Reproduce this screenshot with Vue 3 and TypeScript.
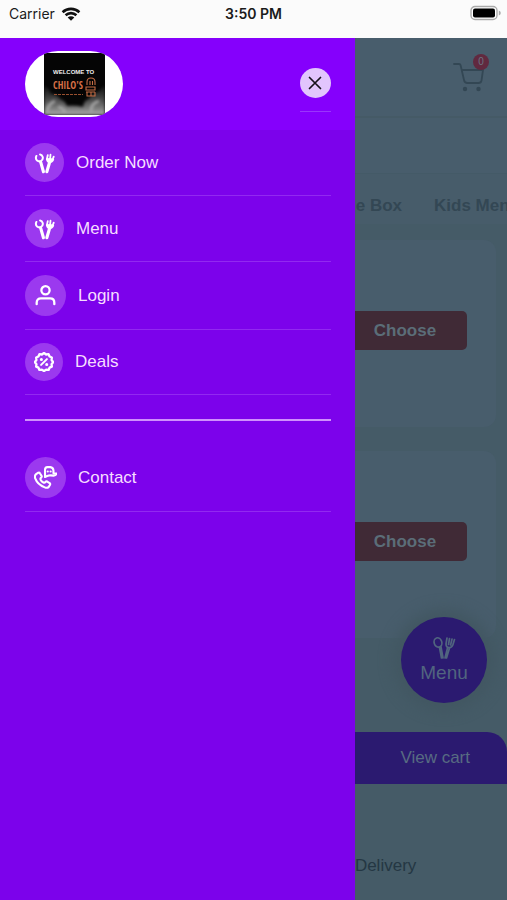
<script setup lang="ts">
import { ref } from 'vue'

type IconName = 'cutlery' | 'user' | 'deal' | 'phone'

interface MenuItem {
  label: string
  icon: IconName
  size: 'small' | 'medium' | 'large'
}

const mainItems: MenuItem[] = [
  { label: 'Order Now', icon: 'cutlery', size: 'medium' },
  { label: 'Menu', icon: 'cutlery', size: 'medium' },
  { label: 'Login', icon: 'user', size: 'large' },
  { label: 'Deals', icon: 'deal', size: 'small' },
]
const extraItems: MenuItem[] = [{ label: 'Contact', icon: 'phone', size: 'large' }]
const groups: MenuItem[][] = [mainItems, extraItems]

const categories: string[] = ['e Box', 'Kids Menu']
const dishes: number[] = [1, 2]
const cartCount = ref(0)
const open = ref(true)
</script>

<template>
  <div class="screen">
    <header class="status">
      <span class="carrier">
        Carrier
        <svg class="wifi" viewBox="0 0 20 14" aria-hidden="true">
          <path d="M1.600 5.200a12.200 12.200 0 0 1 16.800 0M4.600 8.300a7.800 7.800 0 0 1 10.800 0" fill="none" stroke="#111" stroke-width="2.600" />
          <path d="M10 13.800 6.700 10.500a4.700 4.700 0 0 1 6.600 0z" fill="#111" />
        </svg>
      </span>
      <time class="clock">3:50 PM</time>
      <svg class="battery" viewBox="0 0 32 16" aria-hidden="true">
        <rect x="1" y="1.500" width="26" height="13" rx="4" fill="#fff" stroke="#aaa" stroke-width="1.400" />
        <rect x="3" y="3.500" width="22" height="9" rx="2" fill="#000" />
        <path d="M28.800 5.500v5q2-.8 2-2.500t-2-2.500z" fill="#aaa" />
      </svg>
    </header>

    <div class="stage">
      <main class="shop">
        <div class="topbar">
          <a class="cart" href="#cart" aria-label="Cart">
            <svg viewBox="0 0 32 30" aria-hidden="true">
              <path d="M1 2h5q1.300 0 1.600 1.300L11 18q.6 3 3.500 3h11q2.500 0 3-2.500L30 8H9" fill="none" stroke="#334754" stroke-width="1.800" stroke-linecap="round" stroke-linejoin="round" />
              <circle cx="12" cy="27" r="2.200" fill="#334754" />
              <circle cx="25.500" cy="27" r="2.200" fill="#334754" />
            </svg>
            <span class="badge">{{ cartCount }}</span>
          </a>
        </div>
        <div class="strip"></div>
        <nav class="tabs">
          <a v-for="c in categories" :key="c" href="#category">{{ c }}</a>
        </nav>
        <section class="dishes">
          <article v-for="d in dishes" :key="d" class="dish">
            <button type="button" class="choose">Choose</button>
          </article>
        </section>
        <button type="button" class="viewcart">View cart</button>
        <footer class="modes"><a href="#delivery">Delivery</a></footer>
        <button type="button" class="bubble">
          <svg viewBox="0 0 24 24" aria-hidden="true">
            <g fill="none" stroke="#51657f" stroke-width="1.700" stroke-linecap="round" stroke-linejoin="round">
              <ellipse cx="6" cy="6.500" rx="3.800" ry="4.800" transform="rotate(-18 6 6.500)" />
              <path d="M7.500 11.500 9.500 22M9 11 11 22M15 2l-1 6q0 3.300 2.800 3.500 3 .3 4-2.500L22.500 3.500M17.500 2.500l-1 6M20 3l-1.400 6M15.500 12 13 22M17.500 12 14.500 22" />
            </g>
          </svg>
          Menu
        </button>
      </main>

      <aside v-if="open" class="drawer">
        <div class="drawer-head">
          <a class="logo" href="#home" aria-label="Welcome to Chilo's">
            <svg viewBox="0 0 61 62" aria-hidden="true">
              <defs>
                <linearGradient id="smoke" x1="0" y1="0" x2="0" y2="1">
                  <stop offset="0" stop-color="#555" stop-opacity="0.2" />
                  <stop offset="1" stop-color="#ccc" />
                </linearGradient>
                <filter id="soft"><feGaussianBlur stdDeviation="1.600" /></filter>
              </defs>
              <rect width="61" height="62" fill="#050505" />
              <g filter="url(#soft)">
                <path d="M0 33q5 2 7 8 6 0 9 5 5 2 7 7 8-1 16 1 1-7 6-8 3-6 9-7l7-7v30H0z" fill="url(#smoke)" opacity=".85" />
                <path d="M3 58q2-8 8-10M47 58q0-8 8-10M14 54q5 0 7 5" fill="none" stroke="#aaa" stroke-width="2.500" />
              </g>
              <text x="9" y="21" class="logo-small">WELCOME TO</text>
              <text x="9" y="36" class="logo-big">CHILO'S</text>
              <path d="M10 41.500h29" stroke="#99502f" stroke-width="1" stroke-dasharray="3 1" />
              <g fill="none" stroke="#c46c45" stroke-width="1.100">
                <path d="M43 32v-3q0-4 4-4t4 4v3M46 32v-4M48.500 32v-4M42 34h9v3h-9zM42 39h9M43 39v4h8v-4M47 39v4" />
              </g>
            </svg>
          </a>
          <div class="close-wrap">
            <button type="button" class="close" aria-label="Close menu" @click="open = false">
              <svg viewBox="0 0 14 14" aria-hidden="true"><path d="M1.500 1.500l11 11M12.500 1.500l-11 11" stroke="#17121c" stroke-width="1.700" stroke-linecap="round" /></svg>
            </button>
          </div>
        </div>
        <nav class="menu">
          <ul v-for="(group, g) in groups" :key="g">
            <li v-for="item in group" :key="item.label">
              <a href="#menu">
                <span class="disc" :class="item.size">
                  <svg v-if="item.icon === 'cutlery'" viewBox="0 0 24 24" aria-hidden="true">
                    <g fill="none" stroke="#fff" stroke-linecap="round" stroke-linejoin="round">
                      <path d="M2.600 4.300q-1.400 3 .8 5 2.100 1.700 4.500.3 2.200-1.600 1.600-4.200-.7-2.300-2.900-2.700" stroke-width="2.200" />
                      <path d="M7.300 11 10.300 21.500M16.800 12 14 21.500" stroke-width="3.400" />
                      <path d="M15 3.500 14 8M18 3 17.500 8M21.500 5 20 9" stroke-width="2" />
                      <path d="M14 7.500q.2 3.500 3 4 3 0 4.200-3.200l-3.200-1z" stroke-width="1.600" fill="#fff" />
                    </g>
                  </svg>
                  <svg v-else-if="item.icon === 'user'" viewBox="0 0 24 24" aria-hidden="true">
                    <g fill="none" stroke="#fff" stroke-width="2.400" stroke-linecap="round">
                      <circle cx="12" cy="6.500" r="4.300" />
                      <path d="M2.800 21v-1.500q0-4.500 4.500-4.500h9.400q4.500 0 4.500 4.500V21" />
                    </g>
                  </svg>
                  <svg v-else-if="item.icon === 'deal'" viewBox="0 0 24 24" aria-hidden="true">
                    <g fill="none" stroke="#fff" stroke-width="2.800" stroke-linecap="round" stroke-linejoin="round">
                      <path d="M12 2l2.500 1.800 3-.4 1.200 2.800 2.700 1.200-.3 3L23 13l-1.900 2.400.3 3-2.700 1.200-1.200 2.700-3-.3L12 23.500 9.500 22l-3 .3-1.200-2.700-2.700-1.200.3-3L1 13l1.900-2.600-.3-3 2.700-1.200 1.200-2.800 3 .4z" transform="translate(0 -.8)" />
                      <path d="M15.500 8.500l-7 7" stroke-width="2.400" />
                      <path d="M8.800 9h.1M15.200 15h.1" stroke-width="3.600" />
                    </g>
                  </svg>
                  <svg v-else viewBox="0 0 24 24" aria-hidden="true">
                    <g fill="none" stroke="#fff" stroke-width="2.200" stroke-linecap="round" stroke-linejoin="round">
                      <path d="M2.200 8.500 4.500 7q1.200-.3 1.800.8l1.700 2.700q.4 1-.7 1.800-1 .8-.3 2.200 1 1.800 2.800 2.700 1.300.6 2-.4 1-1.200 2-.6l2.500 1.600q1 .8.3 2L15.200 22q-1.500 1.300-4 .3Q3.700 19.500 1.300 13 .3 10 2.200 8.500z" />
                      <path d="M11.500 11.500V4q0-2.800 2.500-2.800h3q3 .3 3.300 3.300v3l3 .3q0 2-2.800 2.200-3.500-.5-5 0-1.500.5-4 1.500z" />
                      <path d="M14.300 5.800h.1M17.300 5.800h.1" stroke-width="2.200" />
                    </g>
                  </svg>
                </span>
                {{ item.label }}
              </a>
            </li>
          </ul>
        </nav>
      </aside>
    </div>
  </div>
</template>

<style>
body {
  margin: 0;
  background: #455b67;
}
</style>

<style scoped>
.screen {
  min-height: 100vh;
  display: flex;
  flex-direction: column;
  overflow: hidden;
  font-family: "Liberation Sans", Arial, sans-serif;
  font-size: 17px;
  line-height: 20px;
}
a {
  color: inherit;
  text-decoration: none;
}
button {
  border: 0;
  padding: 0;
  font: inherit;
  cursor: pointer;
}
svg {
  display: block;
}
.status {
  display: grid;
  grid-template-columns: 1fr auto 1fr;
  align-items: start;
  box-sizing: border-box;
  height: 38px;
  padding: 4px 5px 0 9px;
  background: #fbfbfb;
  color: #1b1b1b;
  font: 14px/20px Inter, sans-serif;
}
.carrier {
  display: flex;
  align-items: center;
  gap: 6px;
}
.wifi {
  width: 20px;
  height: 14px;
}
.clock {
  font-weight: 600;
  margin-right: 4px;
}
.battery {
  width: 32px;
  height: 16px;
  margin-top: 1px;
  justify-self: end;
}
.stage {
  flex: 1;
  display: grid;
  grid-template-columns: 70% 1fr;
}
.shop {
  grid-area: 1 / 1 / 2 / 3;
  min-width: 0;
  position: relative;
  display: flex;
  flex-direction: column;
  background: #455b67;
  color: #334754;
}
.drawer {
  grid-area: 1 / 1 / 2 / 2;
  z-index: 2;
  background: #7c02eb;
  color: #f6ddff;
}
.topbar {
  display: flex;
  justify-content: flex-end;
  box-sizing: border-box;
  height: 80px;
  padding: 24px 22px 0;
  background: #485d6c;
  border-bottom: 2px solid #455a66;
}
.cart {
  position: relative;
  width: 32px;
  height: 30px;
}
.badge {
  position: absolute;
  top: -8px;
  right: -4px;
  width: 16px;
  border-radius: 50%;
  background: #61293f;
  color: #6b7482;
  font-size: 10px;
  line-height: 16px;
  text-align: center;
}
.strip {
  height: 55px;
  background: #485d6c;
  border-bottom: 1px solid #445a67;
}
.tabs {
  display: flex;
  justify-content: flex-end;
  gap: 32px;
  padding: 22px 0 8px;
  margin-right: -13px;
  background: #475c6a;
  font-weight: 700;
  white-space: nowrap;
}
.dishes {
  display: grid;
  gap: 24px;
  padding: 16px 11px;
}
.dish {
  display: flex;
  justify-content: flex-end;
  align-items: flex-start;
  box-sizing: border-box;
  height: 187px;
  padding: 71px 29px 0;
  border-radius: 12px;
  background: #485d6c;
}
.choose {
  width: 124px;
  height: 39px;
  border-radius: 5px;
  background: #402a36;
  color: #5b6d78;
  font-weight: 700;
}
.viewcart {
  height: 52px;
  margin-top: auto;
  padding-right: 37px;
  border-radius: 0 20px 0 0;
  background: #2b1a70;
  color: #586b82;
  text-align: right;
}
.modes {
  box-sizing: border-box;
  height: 116px;
  padding: 72px 0 0 70%;
  color: #243743;
}
.bubble {
  position: absolute;
  right: 20px;
  bottom: 197px;
  width: 86px;
  height: 86px;
  border-radius: 50%;
  background: #2b1a70;
  box-shadow: 0 0 14px 8px #425762;
  color: #51657f;
  font-size: 19px;
  line-height: 22px;
  display: flex;
  flex-direction: column;
  align-items: center;
  justify-content: center;
  gap: 2px;
}
.bubble svg {
  width: 24px;
  height: 24px;
}
.drawer-head {
  display: flex;
  justify-content: space-between;
  align-items: center;
  padding: 13px 24px 13px 25px;
  background: #8500fc;
}
.logo {
  display: flex;
  justify-content: center;
  align-items: center;
  width: 98px;
  height: 66px;
  border-radius: 33px;
  overflow: hidden;
  background: #fff;
}
.logo svg {
  width: 61px;
  height: 62px;
}
.logo-small {
  font: 700 6px "Liberation Sans", sans-serif;
  fill: #eee;
}
.logo-big {
  font: 700 10px "Open Sans Condensed", "DejaVu Sans Condensed", sans-serif;
  fill: #d77046;
}
.close-wrap {
  padding: 12px 0 13px;
  border-bottom: 1px solid #9a35fc;
}
.close {
  display: grid;
  place-items: center;
  width: 31px;
  height: 30px;
  border-radius: 50%;
  background: #e2c5fd;
}
.close svg {
  width: 14px;
  height: 14px;
}
.menu {
  padding: 0 24px 0 25px;
}
.menu ul {
  list-style: none;
  margin: 0;
  padding: 0;
}
.menu ul + ul {
  margin-top: 24px;
  padding-top: 23px;
  border-top: 2px solid #cf91fc;
}
.menu li {
  border-bottom: 1px solid #9229f0;
}
.menu a {
  display: flex;
  align-items: center;
  gap: 12px;
  padding: 13px 0;
}
.disc {
  display: grid;
  place-items: center;
  border-radius: 50%;
  background: #9b39ef;
}
.small {
  width: 38px;
  height: 38px;
}
.medium {
  width: 39px;
  height: 39px;
}
.large {
  width: 41px;
  height: 41px;
}
.disc svg {
  width: 20px;
  height: 20px;
}
.medium svg {
  width: 22px;
  height: 22px;
}
.large svg {
  width: 23px;
  height: 23px;
}
</style>
